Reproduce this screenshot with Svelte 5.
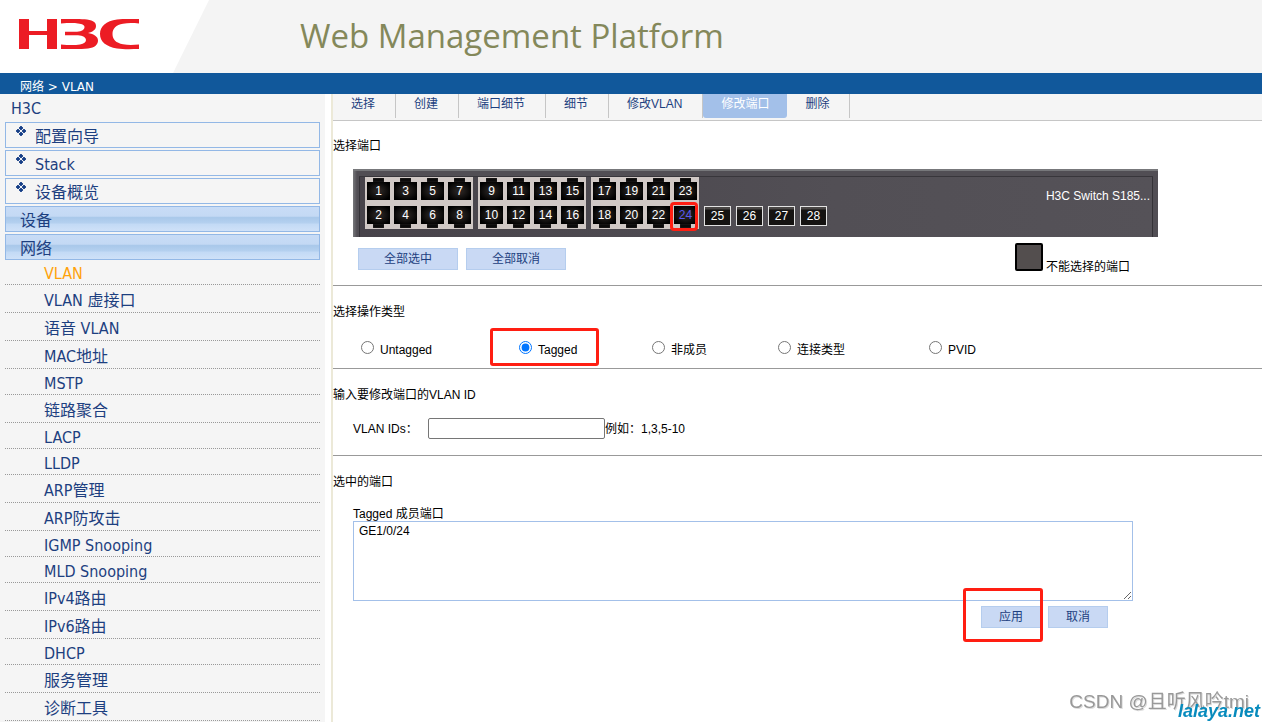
<script>
  const wizardItems = ['配置向导', 'Stack', '设备概览'];
  const groups = ['设备', '网络'];
  const subItems = [
    'VLAN', 'VLAN 虚接口', '语音 VLAN', 'MAC地址', 'MSTP', '链路聚合', 'LACP', 'LLDP', 'ARP管理',
    'ARP防攻击', 'IGMP Snooping', 'MLD Snooping', 'IPv4路由', 'IPv6路由', 'DHCP', '服务管理', '诊断工具'
  ];
  const tabs = ['选择', '创建', '端口细节', '细节', '修改VLAN', '修改端口', '删除'];
  const portBlocks = [0, 8, 16].map((start) => ({
    top: [1, 3, 5, 7].map((n) => n + start),
    bottom: [2, 4, 6, 8].map((n) => n + start)
  }));
  const fiberPorts = [25, 26, 27, 28];
  const operations = ['Untagged', 'Tagged', '非成员', '连接类型', 'PVID'];

  let activeItem = $state('VLAN');
  let activeTab = $state('修改端口');
  let selectedPort = $state(24);
  let operation = $state('Tagged');
  let vlanIds = $state('');
  let members = $state('GE1/0/24');

  const hasHan = (text) => /[\u4e00-\u9fff]/.test(text);
</script>

<header class="banner">
  <div class="brand">
    <svg class="logo" viewBox="0 0 121 31" role="img" aria-label="H3C">
      <path d="M0 0H10V12H28V0H38V30H28V16H10V30H0Z" />
      <path d="M42 0C54 0 62 -.2 68 .6C75 1.6 77 4 77 7C77 10.500 74 12.800 69 14C75 15 79 17.600 79 21.500C79 25.500 76 28.600 69 29.500C62 30.300 54 30 42 30V25.500C50 26.200 56 26.300 61 25.400C65 24.700 67 23.200 67 21C67 18.500 64 16.500 59 16.200H46V12.700H58C63 12.400 65.500 10.500 65.500 8C65.500 5.800 63.500 4.900 59 4.400C55 4 50 4 42 4.500Z" />
      <path d="M120 0V4.500C114 4 109 3.800 104 4.800C97 6 93.500 9.500 93.500 15C93.500 20.500 97 24 104 25.200C109 26.200 114 26 120 25.500V30C111 30.200 104 30.400 98 29.400C87 27.800 81 22.500 81 15C81 7.500 87 2.200 98 .6C104 -.4 111 -.2 120 0Z" />
    </svg>
  </div>
  <h1>Web Management Platform</h1>
</header>
<div class="crumbs">网络 &gt; VLAN</div>

<div class="layout">
  <nav class="sidebar">
    <div class="device">H3C</div>
    {#each wizardItems as item}
      <a class="box" href="#top">
        <svg class="bullet" viewBox="0 0 10 10" aria-hidden="true">
          <path d="M5 0L7 2L5 4L3 2ZM2 3L4 5L2 7L0 5ZM8 3L10 5L8 7L6 5ZM5 6L7 8L5 10L3 8Z" />
        </svg>
        <span>{item}</span>
      </a>
    {/each}
    {#each groups as group}
      <a class="box group" href="#top"><span>{group}</span></a>
    {/each}
    <ul>
      {#each subItems as item}
        <li class:han={hasHan(item)}>
          <a href="#top" class:current={item === activeItem} onclick={() => (activeItem = item)}>{item}</a>
        </li>
      {/each}
    </ul>
  </nav>

  <main>
    <div class="tabs">
      {#each tabs as tab}
        <button class="tab" class:active={tab === activeTab} onclick={() => (activeTab = tab)}>{tab}</button>
      {/each}
    </div>

    <section class="ports">
      <h2>选择端口</h2>
      <div class="chassis">
        <div class="face">
          {#each portBlocks as block}
            <div class="block">
              {#each block.top as n}
                <button class="port up" class:chosen={n === selectedPort} onclick={() => (selectedPort = n)}>{n}</button>
              {/each}
              {#each block.bottom as n}
                <button class="port down" class:chosen={n === selectedPort} onclick={() => (selectedPort = n)}>
                  {n}{#if n === 24}<span class="mark"></span>{/if}
                </button>
              {/each}
            </div>
          {/each}
          <div class="fiber">
            {#each fiberPorts as n}
              <button class="sfp" class:chosen={n === selectedPort} onclick={() => (selectedPort = n)}>{n}</button>
            {/each}
          </div>
          <span class="model">H3C Switch S185...</span>
        </div>
      </div>
      <div class="under">
        <button class="action wide">全部选中</button>
        <button class="action wide">全部取消</button>
        <div class="legend"><span class="swatch"></span><span>不能选择的端口</span></div>
      </div>
    </section>

    <section class="types">
      <h2>选择操作类型</h2>
      <div class="radios">
        {#each operations as op}
          <label class:outlined={op === 'Tagged'}>
            <input type="radio" name="operation" value={op} bind:group={operation} />
            <span>{op}</span>
          </label>
        {/each}
      </div>
    </section>

    <section class="vlan">
      <h2>输入要修改端口的VLAN ID</h2>
      <div class="field">
        <label for="vlan-ids">VLAN IDs：</label>
        <input id="vlan-ids" type="text" bind:value={vlanIds} />
        <span>例如：1,3,5-10</span>
      </div>
    </section>

    <section class="members">
      <h2>选中的端口</h2>
      <div class="list">
        <label for="member-ports">Tagged 成员端口</label>
        <textarea id="member-ports" bind:value={members}></textarea>
        <div class="buttons">
          <div class="apply"><button class="action">应用</button></div>
          <button class="action">取消</button>
        </div>
      </div>
    </section>
  </main>
</div>

<div class="credit">CSDN @且听风吟tmj</div>
<div class="site">lalaya.net</div>

<style>
  :global(body) {
    background: #fff;
    font: 12px/16px "Liberation Sans", "Noto Sans CJK SC", sans-serif;
    color: #000;
  }
  * {
    box-sizing: border-box;
  }
  button,
  input,
  textarea {
    font: inherit;
  }
  a {
    color: inherit;
    text-decoration: none;
  }
  h1,
  h2 {
    margin: 0;
    font-size: 12px;
    font-weight: 400;
  }
  .banner {
    display: flex;
    height: 73px;
    background: #f4f4f4;
  }
  .brand {
    flex: none;
    width: 209px;
    padding: 19px 0 0 19px;
    background: #fff;
    clip-path: polygon(0 0, 100% 0, 173px 100%, 0 100%);
  }
  .logo {
    display: block;
    width: 121px;
    height: 31px;
    fill: #ec1c24;
  }
  h1 {
    padding: 12px 0 0 91px;
    font: 33px/48px "Open Sans", "Noto Sans", sans-serif;
    color: #84885a;
    white-space: nowrap;
  }
  .crumbs {
    height: 21px;
    padding: 6px 0 0 20px;
    background: #11589b;
    color: #fff;
    font: 12px/16px "DejaVu Sans", "Noto Sans CJK SC", sans-serif;
    overflow: hidden;
  }
  .layout {
    display: flex;
  }
  .sidebar {
    flex: none;
    width: 325px;
    padding: 0 5px 1px;
    background: #f5f5f5;
    color: #1d3f80;
    font: 16px/24px "DejaVu Sans Condensed", "Noto Sans CJK SC", sans-serif;
  }
  .device {
    height: 28px;
    padding: 3px 0 0 6px;
  }
  .box {
    display: flex;
    gap: 9px;
    height: 26px;
    margin-bottom: 2px;
    padding: 2px 0 0 10px;
    border: 1px solid #93b8e6;
  }
  .bullet {
    flex: none;
    width: 10px;
    height: 10px;
    margin-top: 1px;
    overflow: visible;
    fill: #163f87;
    stroke: #163f87;
    stroke-width: 0.8;
  }
  .group {
    padding-left: 14px;
    background: linear-gradient(#c8dcf6 0, #c4d9f4 38%, #a9c8ea 44%, #b4d0ef 66%, #c3daf5 72%, #cfe1f8 100%);
  }
  ul {
    margin: -3px 0 0;
    padding: 0;
    list-style: none;
  }
  li {
    height: 26px;
    padding-left: 39px;
    border-bottom: 1px dotted #999;
    line-height: 30px;
  }
  .han {
    height: 28px;
    line-height: 32px;
  }
  .current {
    color: #ffa20a;
  }
  main {
    flex: 1;
    min-width: 0;
    margin-left: 6px;
    border-left: 2px solid #ece9d8;
  }
  .tabs {
    display: flex;
    height: 27px;
    background: #f5f5f5;
    border-bottom: 1px solid #c6c6c6;
  }
  .tab {
    height: 24px;
    padding: 0 20px 4px 18px;
    border: 0;
    border-right: 1px solid #c6c6c6;
    background: none;
    color: #1d3f80;
    white-space: nowrap;
  }
  .tab.active {
    padding-right: 18px;
    border-right: 0;
    background: #a3c0e9;
    color: #fff;
    border-radius: 0 0 3px 3px;
  }
  section {
    border-bottom: 1px solid #999;
  }
  .ports {
    height: 165px;
    padding-top: 17px;
  }
  .chassis {
    width: 805px;
    height: 68px;
    margin: 15px 0 0 20px;
    padding: 6px 5px 0 6px;
    background: linear-gradient(90deg, #77787b 0, #514e54 4px, #514e54 100%);
    border-top: 2px solid #77787b;
  }
  .face {
    display: flex;
    gap: 5px;
    height: 60px;
    padding-left: 5px;
    border: 1px solid #343237;
    border-width: 0 1px 0 1px;
    background: linear-gradient(90deg, #47434a, #524f55 60%, #555258);
    box-shadow: 0 -1px #38363b;
  }
  .block {
    display: grid;
    grid-template-columns: repeat(4, 23px);
    column-gap: 4px;
    align-content: start;
    row-gap: 6px;
    width: 108px;
    height: 52px;
    padding: 5px 2px;
    background: #d0c8c5;
  }
  .port,
  .sfp {
    position: relative;
    height: 18px;
    padding: 0;
    border: 0;
    background: radial-gradient(#25211f 20%, #000 80%);
    color: #fff;
    line-height: 16px;
  }
  .port::before {
    content: "";
    position: absolute;
    left: 6px;
    width: 11px;
    height: 4px;
    background: #0b0a0a;
    box-shadow: inset 0 0 0 1px #151313;
    border-radius: 1px;
  }
  .up::before {
    top: -4px;
  }
  .down::before {
    bottom: -4px;
  }
  .fiber {
    display: flex;
    gap: 5px;
    padding-top: 29px;
  }
  .sfp {
    width: 27px;
    height: 20px;
    border: 1px solid #e2e2e2;
    background: linear-gradient(#4a4746 0, #4a4746 2px, #151312 3px);
    line-height: 18px;
  }
  .port.chosen,
  .sfp.chosen {
    color: #5a5af0;
  }
  .mark {
    position: absolute;
    left: -4px;
    top: -4px;
    width: 28px;
    height: 29px;
    border: 3px solid #ff1e12;
    border-radius: 4px;
  }
  .model {
    margin-left: auto;
    padding: 11px 2px 0 0;
    color: #fff;
    white-space: nowrap;
  }
  .under {
    display: flex;
    gap: 8px;
    width: 805px;
    margin-left: 25px;
    padding: 6px 33px 0 0;
  }
  .action {
    width: 60px;
    height: 22px;
    padding: 0 0 1px;
    border: 1px solid #b5cdee;
    background: #c9d9f4;
    color: #1d3f80;
    line-height: 18px;
  }
  .wide {
    width: 100px;
    margin-top: 5px;
  }
  .legend {
    display: flex;
    gap: 3px;
    margin-left: auto;
    line-height: 48px;
    height: 28px;
  }
  .swatch {
    width: 28px;
    height: 28px;
    border: 2px solid #000;
    border-radius: 2px;
    background: #534e4e;
  }
  .types {
    height: 83px;
    padding-top: 18px;
  }
  .radios {
    display: grid;
    grid-template-columns: 158fr 133fr 126fr 151fr 333fr;
    padding: 19px 0 0 28px;
  }
  .radios label {
    position: relative;
    display: flex;
    gap: 6px;
    align-items: flex-start;
    justify-self: start;
    white-space: nowrap;
  }
  .radios input {
    flex: none;
    width: 13px;
    height: 13px;
    margin: 2px 0 0;
  }
  .radios span {
    padding-top: 3px;
  }
  .outlined::after {
    content: "";
    position: absolute;
    inset: -11px -22px -8px -29px;
    border: 3px solid #ff1e12;
    border-radius: 3px;
    pointer-events: none;
  }
  .vlan {
    height: 87px;
    padding-top: 18px;
  }
  .field {
    display: flex;
    align-items: center;
    padding: 15px 0 0 20px;
  }
  .field label {
    width: 75px;
  }
  .field input {
    width: 177px;
    height: 21px;
    padding: 1px 2px;
    border: 1px solid #767676;
    border-radius: 2px;
  }
  .members {
    padding-top: 18px;
    border: 0;
  }
  .list {
    width: 780px;
    margin: 16px 0 0 20px;
  }
  .list label {
    display: block;
    height: 15px;
  }
  textarea {
    display: block;
    width: 100%;
    height: 80px;
    padding: 1px 5px;
    border: 1px solid #a3c0e9;
    outline: 0;
  }
  .buttons {
    display: flex;
    justify-content: flex-end;
    gap: 7px;
    padding: 5px 25px 0 0;
  }
  .apply {
    position: relative;
  }
  .apply::after {
    content: "";
    position: absolute;
    inset: -18px -2px -14px -18px;
    border: 3px solid #ff1e12;
    border-radius: 3px;
    pointer-events: none;
  }
  .credit {
    position: fixed;
    right: 13px;
    bottom: 8px;
    color: #999;
    font-size: 19px;
    line-height: 24px;
    text-shadow: 1px 1px #ddd;
  }
  .site {
    position: fixed;
    right: 2px;
    bottom: 0;
    color: #078bbd;
    font: italic bold 18px/22px "Liberation Sans", sans-serif;
  }
</style>
